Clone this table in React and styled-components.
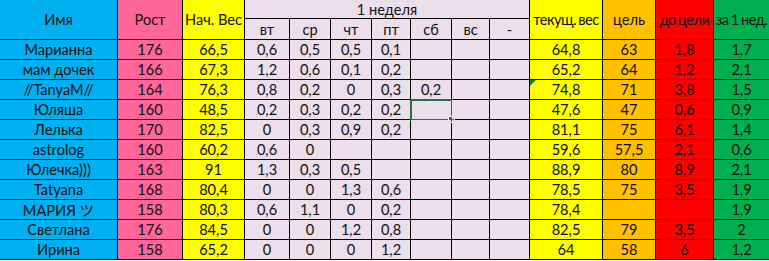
import React from 'react';
import styled, { createGlobalStyle } from 'styled-components';

const GlobalStyle = createGlobalStyle`
  body {
    margin: 0;
    background: #ffffff;
    font-family: Lato, "Noto Sans", "Noto Sans CJK JP", sans-serif;
  }
`;

const fills = {
  name: '#00b0f0',
  height: '#ff6699',
  start: '#ffff00',
  week: '#ecdeeb',
  current: '#ffff00',
  goal: '#ffc000',
  left: '#ff0000',
  lost: '#00b050',
};

const Sheet = styled.div`
  display: grid;
  grid-template-columns: 117px 64px 61px 44px 40px 40px 38px 40px 37px 39px 72px 52px 57px 55px;
  grid-template-rows: 18px 20px repeat(11, 19px);
  gap: 1px;
  padding-bottom: 1px;
  width: 769px;
  background: #000000;
  font-size: 14.6px;
  color: #111111;
`;

const Cell = styled.div`
  position: relative;
  display: flex;
  align-items: center;
  justify-content: center;
  white-space: nowrap;
  background: ${(p) => fills[p.$fill]};
  grid-row: ${(p) => p.$rows || 'auto'};
  grid-column: ${(p) => p.$cols || 'auto'};
  letter-spacing: ${(p) => (p.$tight ? '-0.5px' : 'normal')};
  word-spacing: ${(p) => (p.$tight ? '-1px' : 'normal')};
  ${(p) =>
    p.$flag &&
    `&::before {
      content: '';
      position: absolute;
      left: 0;
      top: 0;
      border-top: 6px solid #1e7b45;
      border-right: 6px solid transparent;
    }`}
`;

const Selection = styled.div`
  position: absolute;
  left: -1px;
  top: -1px;
  right: -2px;
  bottom: -2px;
  border: 2px solid #217346;
  pointer-events: none;
`;

const Handle = styled.div`
  position: absolute;
  right: -4px;
  bottom: -4px;
  width: 5px;
  height: 5px;
  background: #217346;
  border: 1px solid #ffffff;
`;

const rows = [
  ['Марианна', '176', '66,5', ['0,6', '0,5', '0,5', '0,1', '', '', ''], '64,8', '63', '1,8', '1,7'],
  ['мам дочек', '166', '67,3', ['1,2', '0,6', '0,1', '0,2', '', '', ''], '65,2', '64', '1,2', '2,1'],
  ['//TanyaM//', '164', '76,3', ['0,8', '0,2', '0', '0,3', '0,2', '', ''], '74,8', '71', '3,8', '1,5'],
  ['Юляша', '160', '48,5', ['0,2', '0,3', '0,2', '0,2', '', '', ''], '47,6', '47', '0,6', '0,9'],
  ['Лелька', '170', '82,5', ['0', '0,3', '0,9', '0,2', '', '', ''], '81,1', '75', '6,1', '1,4'],
  ['astrolog', '160', '60,2', ['0,6', '0', '', '', '', '', ''], '59,6', '57,5', '2,1', '0,6'],
  ['Юлечка)))', '163', '91', ['1,3', '0,3', '0,5', '', '', '', ''], '88,9', '80', '8,9', '2,1'],
  ['Tatyana', '168', '80,4', ['0', '0', '1,3', '0,6', '', '', ''], '78,5', '75', '3,5', '1,9'],
  ['МАРИЯ ツ', '158', '80,3', ['0,6', '1,1', '0', '0,2', '', '', ''], '78,4', '', '', '1,9'],
  ['Светлана', '176', '84,5', ['0', '0', '1,2', '0,8', '', '', ''], '82,5', '79', '3,5', '2'],
  ['Ирина', '158', '65,2', ['0', '0', '0', '1,2', '', '', ''], '64', '58', '6', '1,2'],
];

const days = ['вт', 'ср', 'чт', 'пт', 'сб', 'вс', '-'];

const App = () => {
  return (
    <>
      <GlobalStyle />
      <Sheet>
        <Cell $fill="name" $rows="1 / 3">Имя</Cell>
        <Cell $fill="height" $rows="1 / 3">Рост</Cell>
        <Cell $fill="start" $rows="1 / 3">Нач. Вес</Cell>
        <Cell $fill="week" $cols="4 / 11">1 неделя</Cell>
        <Cell $fill="current" $rows="1 / 3" $cols="11" $tight>текущ. вес</Cell>
        <Cell $fill="goal" $rows="1 / 3" $cols="12">цель</Cell>
        <Cell $fill="left" $rows="1 / 3" $cols="13" $tight>до цели</Cell>
        <Cell $fill="lost" $rows="1 / 3" $cols="14" $tight>за 1 нед.</Cell>
        {days.map((d, i) => (
          <Cell key={d} $fill="week" $rows="2" $cols={String(4 + i)}>
            {d}
          </Cell>
        ))}

        {rows.map(([name, h, start, week, cur, goal, left, lost], r) => (
          <React.Fragment key={name}>
            <Cell $fill="name">{name}</Cell>
            <Cell $fill="height">{h}</Cell>
            <Cell $fill="start">{start}</Cell>
            {week.map((v, i) => (
              <Cell key={i} $fill="week">
                {v}
                {r === 3 && i === 4 && (
                  <Selection>
                    <Handle />
                  </Selection>
                )}
              </Cell>
            ))}
            <Cell $fill="current" $flag={r === 2}>{cur}</Cell>
            <Cell $fill="goal">{goal}</Cell>
            <Cell $fill="left">{left}</Cell>
            <Cell $fill="lost">{lost}</Cell>
          </React.Fragment>
        ))}
      </Sheet>
    </>
  );
};

export default App;
